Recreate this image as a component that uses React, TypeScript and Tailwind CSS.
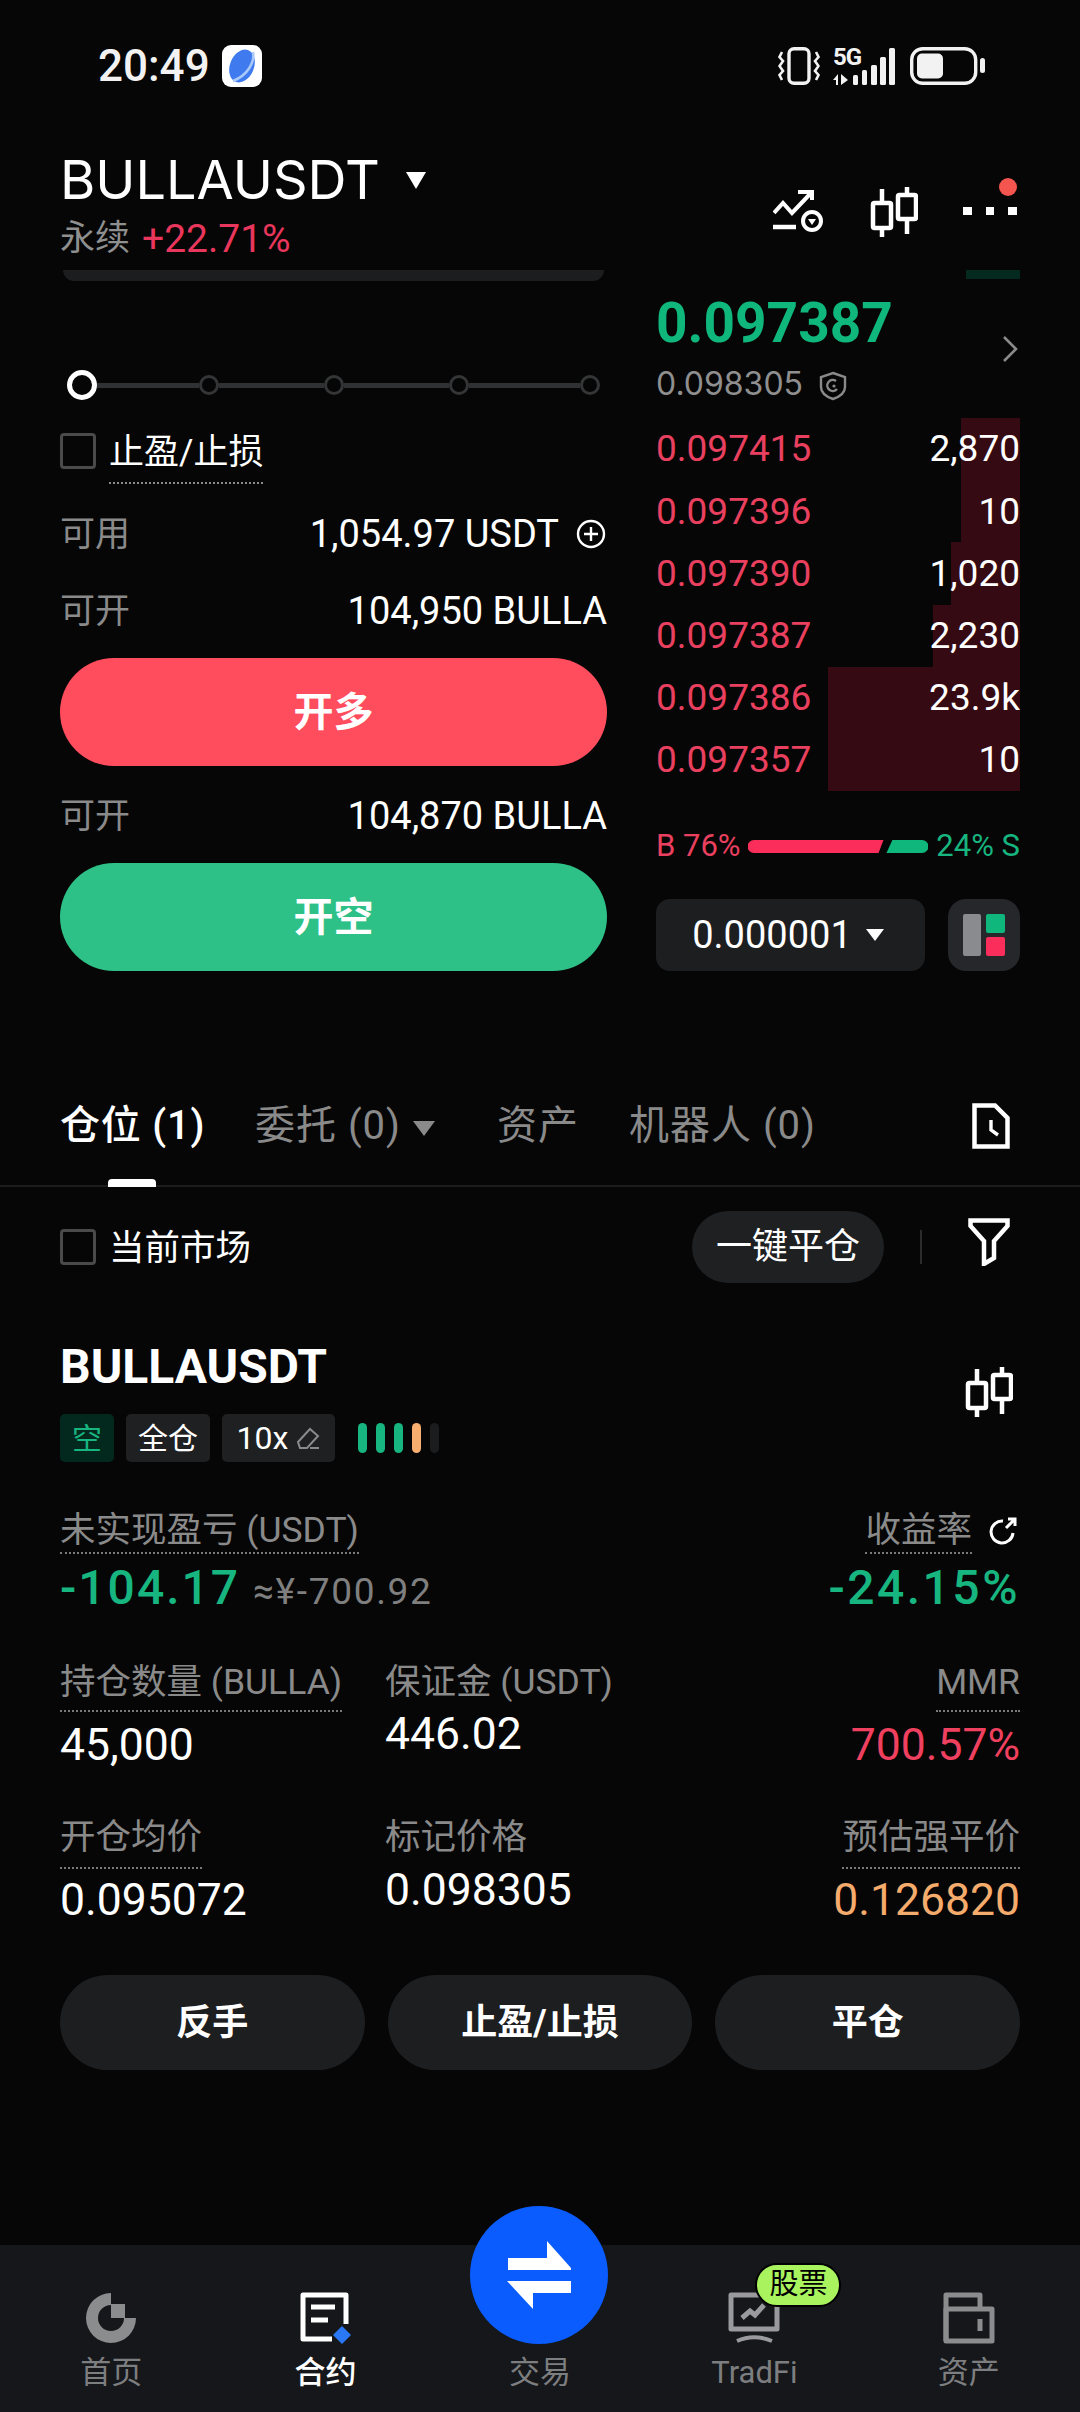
import React from "react";

function Tri({ w = 20, h = 14, color = "#fff" }: { w?: number; h?: number; color?: string }) {
  return (
    <svg width={w} height={h} viewBox="0 0 20 14" className="shrink-0" preserveAspectRatio="none">
      <path d="M0 0H20L10 14Z" fill={color} />
    </svg>
  );
}

function Candles({ className = "" }: { className?: string }) {
  return (
    <svg width="48" height="52" viewBox="0 0 48 52" className={className} fill="none" stroke="#fff" strokeWidth="4.5">
      <path d="M12 3V17M12 42V51M37 1V9M37 33V48" />
      <rect x="3" y="17" width="18" height="25" rx="1.5" />
      <rect x="28" y="9" width="18" height="24" rx="1.5" />
    </svg>
  );
}

function StatusBar() {
  return (
    <div className="h-[132px] flex items-start justify-between pl-[98px] pr-[95px] pt-[45px]">
      <div className="flex items-center gap-[12px] h-[42px]">
        <span className="text-[44px] leading-[42px] font-medium text-[#f2f2f2] font-['Roboto']">20:49</span>
        <svg width="40" height="42" viewBox="0 0 40 42">
          <rect width="40" height="42" rx="9" fill="#fff" />
          <ellipse cx="20" cy="21" rx="12" ry="17" transform="rotate(22 20 21)" fill="#3f7bee" />
          <path d="M31 7C33 17 26 30 11 36" stroke="#a9c8fb" strokeWidth="2.6" fill="none" />
        </svg>
      </div>
      <div className="flex items-center h-[42px]">
        <svg width="42" height="38" viewBox="0 0 42 38" fill="none" stroke="#f2f2f2">
          <rect x="11" y="1.7" width="20" height="34.6" rx="5" strokeWidth="3.4" />
          <path d="M4 5L1.5 10L5 14L1.5 19L5 24L1.5 28L4 33M38 5L40.5 10L37 14L40.5 19L37 24L40.5 28L38 33" strokeWidth="2.6" />
        </svg>
        <div className="relative w-[62px] h-[37px] ml-[13px]">
          <span className="absolute left-0 top-[-3px] text-[24px] leading-[24px] font-bold text-[#f2f2f2] font-['Roboto'] tracking-[-1px]">5G</span>
          <svg width="62" height="37" viewBox="0 0 62 37" className="absolute left-0 top-0" fill="#f2f2f2">
            <path d="M0 32L5 26V37H3V32ZM8 26L15 32L8 37Z" />
            <rect x="20" y="27" width="5" height="10" rx="1.5" />
            <rect x="29" y="22" width="5" height="15" rx="1.5" />
            <rect x="38" y="17" width="6" height="20" rx="1.5" />
            <rect x="47" y="9" width="6" height="28" rx="1.5" />
            <rect x="56" y="0" width="6" height="37" rx="1.5" />
          </svg>
        </div>
        <svg width="75" height="38" viewBox="0 0 75 38" fill="none" className="ml-[15px]">
          <rect x="1.7" y="1.7" width="64" height="34.6" rx="11" stroke="#f2f2f2" strokeWidth="3.4" />
          <rect x="7" y="6.5" width="26" height="25" rx="5" fill="#f2f2f2" />
          <rect x="70" y="11" width="5" height="15" rx="2.5" fill="#f2f2f2" />
        </svg>
      </div>
    </div>
  );
}

function Header() {
  return (
    <div className="h-[138px] flex justify-between pl-[60px] pr-[60px]">
      <div>
        <div className="flex items-center h-[64px] mt-[16px]">
          <span className="text-[54px] leading-[64px] text-white">BULLAUSDT</span>
          <span className="ml-[26px]"><Tri w={20} h={17} /></span>
        </div>
        <div className="flex items-center h-[44px] mt-[5px] leading-[44px] font-['Roboto','Noto_Sans_CJK_SC']">
          <span className="text-[35px] text-[#8f8f8f]">永续</span>
          <span className="ml-[12px] text-[39px] text-[#e9365c]">+22.71%</span>
        </div>
      </div>
      <div className="flex items-start pt-[45px]">
        <svg width="50" height="42" viewBox="0 0 50 42" fill="none" stroke="#fff" strokeWidth="4" className="mt-[13px]">
          <path d="M1 23L10 13L19 23L37 4" />
          <path d="M25 2H39V10" />
          <path d="M0 37H23" strokeWidth="4.5" />
          <circle cx="39" cy="31" r="9" />
          <path d="M35 29H43L39 35Z" fill="#fff" stroke="none" />
        </svg>
        <Candles className="ml-[47px] mt-[9px]" />
        <div className="relative w-[57px] h-[50px] ml-[45px]">
          <div className="absolute left-0 top-[30px] flex gap-[14px]">
            <div className="w-[9px] h-[8px] bg-white" />
            <div className="w-[8px] h-[8px] bg-white" />
            <div className="w-[9px] h-[8px] bg-white" />
          </div>
          <div className="absolute right-[3px] top-[1px] w-[18px] h-[18px] rounded-full bg-[#f4554e]" />
        </div>
      </div>
    </div>
  );
}

function Slider() {
  const Node = () => <div className="w-[20px] h-[20px] rounded-full border-[3px] border-[#343536] shrink-0" />;
  const Line = ({ w }: { w: string }) => <div className={`${w} h-[5px] bg-[#303132]`} />;
  return (
    <div className="flex items-center ml-[7px] mt-[89px] h-[30px]">
      <div className="w-[30px] h-[30px] rounded-full border-[5px] border-white shrink-0" />
      <Line w="w-[102px]" />
      <Node />
      <Line w="w-[105px]" />
      <Node />
      <Line w="w-[105px]" />
      <Node />
      <Line w="w-[111px]" />
      <Node />
    </div>
  );
}

function InfoRow({ label, children }: { label: string; children: React.ReactNode }) {
  return (
    <div className="flex justify-between items-center h-[44px] font-['Roboto','Noto_Sans_CJK_SC']">
      <span className="text-[35px] leading-[44px] pt-[2px] text-[#8a8a8a]">{label}</span>
      {children}
    </div>
  );
}

function LeftForm() {
  return (
    <div className="w-[547px]">
      <div className="h-[11px] mx-[3px] rounded-b-[14px] bg-[#1c1d1f]" />
      <Slider />
      <div className="flex items-center mt-[33px] h-[36px]">
        <div className="w-[36px] h-[36px] rounded-[4px] border-[3px] border-[#4a4a4a]" />
        <span className="ml-[13px] text-[35px] leading-[46px] text-white font-['Roboto','Noto_Sans_CJK_SC'] border-b-[2px] border-dotted border-[#8a8a8a] mt-[12px] h-[54px]">止盈/止损</span>
      </div>
      <div className="mt-[43px]">
        <InfoRow label="可用">
          <span className="flex items-center text-[38px] leading-[44px] text-white">
            1,054.97 USDT
            <svg width="30" height="30" viewBox="0 0 30 30" fill="none" stroke="#fff" strokeWidth="2.4" className="ml-[17px] mr-[1px]">
              <circle cx="15" cy="15" r="13" />
              <path d="M15 8V22M8 15H22" />
            </svg>
          </span>
        </InfoRow>
      </div>
      <div className="mt-[33px]">
        <InfoRow label="可开"><span className="text-[38px] leading-[44px] text-white">104,950 BULLA</span></InfoRow>
      </div>
      <div className="mt-[25px] h-[108px] rounded-full bg-[#ff4d5e] flex items-center justify-center text-[40px] font-semibold text-white">开多</div>
      <div className="mt-[28px]">
        <InfoRow label="可开"><span className="text-[38px] leading-[44px] text-white">104,870 BULLA</span></InfoRow>
      </div>
      <div className="mt-[25px] h-[108px] rounded-full bg-[#2ec187] flex items-center justify-center text-[40px] font-semibold text-white">开空</div>
    </div>
  );
}

const book: [string, string, string][] = [
  ["0.097415", "2,870", "w-[59px]"],
  ["0.097396", "10", "w-[59px]"],
  ["0.097390", "1,020", "w-[69px]"],
  ["0.097387", "2,230", "w-[87px]"],
  ["0.097386", "23.9k", "w-[192px]"],
  ["0.097357", "10", "w-[192px]"],
];

function RightBook() {
  return (
    <div className="w-[364px] ml-[49px]">
      <div className="h-[9px] flex justify-end"><div className="w-[54px] bg-[#04291f]" /></div>
      <div className="mt-[15px] h-[58px]">
        <div className="text-[55px] leading-[58px] font-bold text-[#0fb77d] font-['Roboto']">0.097387</div>
      </div>
      <div className="relative flex items-center mt-[10px] h-[44px]">
        <span className="text-[32px] leading-[44px] text-[#8f8f8f]">0.098305</span>
        <svg width="28" height="30" viewBox="0 0 28 30" fill="none" stroke="#8a8a8a" strokeWidth="2.4" className="ml-[16px] mt-[4px]">
          <path d="M14 2L26 6V16C26 22 20 26 14 28C8 26 2 22 2 16V6Z" />
          <path d="M18 18A5.5 5.5 0 1 1 17 10" />
          <circle cx="15" cy="15" r="1.6" fill="#8a8a8a" stroke="none" />
        </svg>
        <svg width="16" height="26" viewBox="0 0 16 26" fill="none" stroke="#8a8a8a" strokeWidth="2.6" className="absolute right-[2px] top-[-26px]">
          <path d="M2 1L14 13L2 25" />
        </svg>
      </div>
      <div className="mt-[12px]">
        {book.map(([p, q, w]) => (
          <div key={p} className="relative h-[62.2px] flex items-center justify-between font-['Roboto']">
            <div className={`absolute right-0 top-0 bottom-0 ${w} bg-[#360a12]`} />
            <span className="relative text-[37px] text-[#e9405f]">{p}</span>
            <span className="relative text-[37px] text-white">{q}</span>
          </div>
        ))}
      </div>
      <div className="flex items-center justify-between mt-[35px] h-[40px] text-[31px] font-['Roboto']">
        <span className="text-[#e9405f]">B 76%</span>
        <svg width="180" height="13" viewBox="0 0 182 13" preserveAspectRatio="none" className="mx-[6px]">
          <path d="M6 0H137L132 13H6A6 6 0 0 1 6 0Z" fill="#fb2e5b" />
          <path d="M146 0H176A6 6 0 0 1 176 13H140Z" fill="#0fb77d" />
        </svg>
        <span className="text-[#17b57f]">24% S</span>
      </div>
      <div className="flex justify-between mt-[33px]">
        <div className="w-[269px] h-[72px] rounded-[14px] bg-[#1d1e20] flex items-center justify-center gap-[14px] pr-[5px]">
          <span className="text-[38px] text-white font-['Roboto']">0.000001</span>
          <Tri w={18} h={12} />
        </div>
        <div className="w-[72px] h-[72px] rounded-[18px] bg-[#26272a] grid grid-cols-[18px_19px] grid-rows-[19px_19px] gap-x-[5px] gap-y-[4px] content-center justify-center">
          <div className="row-span-2 rounded-[2px] bg-[#8a8b8e]" />
          <div className="rounded-[2px] bg-[#0fb77d]" />
          <div className="rounded-[2px] bg-[#fb2e5b]" />
        </div>
      </div>
    </div>
  );
}

function Tabs() {
  return (
    <div className="mt-[132px] h-[84px] relative border-b-[2px] border-[#1b1c1e] flex items-start pl-[60px] pr-[70px] text-[40px] leading-[46px] font-['Roboto','Noto_Sans_CJK_SC'] text-[#8a8a8a]">
      <span className="text-white font-medium w-[145px] whitespace-nowrap tracking-[0.8px]">仓位 (1)</span>
      <span className="ml-[50px] w-[143px] whitespace-nowrap tracking-[1px]">委托 (0)</span>
      <span className="ml-[15px] mt-[18px]"><Tri w={22} h={15} color="#8a8a8a" /></span>
      <span className="ml-[62px] whitespace-nowrap tracking-[1px]">资产</span>
      <span className="ml-[50px] whitespace-nowrap tracking-[1px]">机器人 (0)</span>
      <svg width="38" height="46" viewBox="0 0 38 46" fill="none" stroke="#fff" strokeWidth="4.5" className="ml-auto">
        <path d="M2.5 2.5H23L35.5 15V43.5H2.5Z" />
        <path d="M19 17V27L26 32" strokeWidth="3.4" />
      </svg>
      <div className="absolute left-[108px] bottom-[-2px] w-[48px] h-[8px] rounded-t-[4px] bg-white" />
    </div>
  );
}

function Filter() {
  return (
    <div className="flex items-center h-[72px] mt-[24px] pl-[60px] pr-[70px]">
      <div className="w-[36px] h-[36px] rounded-[4px] border-[3px] border-[#4a4a4a]" />
      <span className="ml-[13px] pt-[2px] text-[35.5px] text-white font-['Roboto','Noto_Sans_CJK_SC']">当前市场</span>
      <div className="ml-auto w-[192px] h-[72px] rounded-full bg-[#1f2022] flex items-center justify-center text-[36px] text-white font-['Roboto','Noto_Sans_CJK_SC']">一键平仓</div>
      <div className="ml-[36px] w-[2px] h-[34px] bg-[#2a2b2d]" />
      <svg width="42" height="48" viewBox="0 0 42 48" fill="none" stroke="#fff" strokeWidth="4.5" className="ml-[46px] mb-[10px]">
        <path d="M2.5 2.5H39.5V8L26 23V40L16 46V23L2.5 8Z" />
      </svg>
    </div>
  );
}

function Label({ children, right, h }: { children: React.ReactNode; right?: boolean; h: string }) {
  return (
    <span className={`text-[35.5px] leading-[44px] ${h} text-[#8a8a8a] whitespace-nowrap border-b-[2px] border-dotted border-[#7a7a7a] ${right ? "self-end" : "self-start"}`}>
      {children}
    </span>
  );
}

function Position() {
  return (
    <div className="px-[60px] font-['Roboto','Noto_Sans_CJK_SC']">
      <div className="relative mt-[61px]">
        <div className="h-[46px] text-[48px] leading-[46px] font-bold text-white">BULLAUSDT</div>
        <div className="absolute right-[7px] top-[22px]"><Candles /></div>
      </div>
      <div className="flex items-center mt-[24px] h-[48px] text-[30px]">
        <div className="w-[54px] h-[48px] rounded-[5px] bg-[#03291f] text-[#17b57f] flex items-center justify-center">空</div>
        <div className="ml-[12px] w-[84px] h-[48px] rounded-[5px] bg-[#1f2022] text-white flex items-center justify-center">全仓</div>
        <div className="ml-[12px] w-[113px] h-[48px] rounded-[5px] bg-[#1f2022] text-white flex items-center justify-center gap-[8px] text-[32px]">
          10x
          <svg width="24" height="24" viewBox="0 0 24 24" fill="none" stroke="#8a8a8a" strokeWidth="2">
            <path d="M2 16L14 3L22 10L11 22H4L2 16Z" />
            <path d="M14 22H23" />
          </svg>
        </div>
        <div className="ml-[23px] flex gap-[9px]">
          <div className="w-[9px] h-[30px] rounded-full bg-[#17b57f]" />
          <div className="w-[9px] h-[30px] rounded-full bg-[#17b57f]" />
          <div className="w-[9px] h-[30px] rounded-full bg-[#17b57f]" />
          <div className="w-[9px] h-[30px] rounded-full bg-[#f7ae6e]" />
          <div className="w-[9px] h-[30px] rounded-full bg-[#1b1c1e]" />
        </div>
      </div>

      <div className="flex justify-between mt-[46px]">
        <div className="flex flex-col">
          <Label h="h-[46px]">未实现盈亏 (USDT)</Label>
          <div className="flex items-baseline mt-[4px] h-[60px]">
            <span className="text-[48px] leading-[60px] font-medium text-[#17b57f] tracking-[2px]">-104.17</span>
            <span className="ml-[13px] text-[37px] text-[#7f7f7f] tracking-[1.7px]">≈¥-700.92</span>
          </div>
        </div>
        <div className="flex flex-col items-end">
          <div className="flex items-start">
            <Label h="h-[46px]">收益率</Label>
            <svg width="30" height="30" viewBox="0 0 30 30" fill="none" stroke="#fff" strokeWidth="3" className="ml-[16px] mt-[8px] mr-[2px]">
              <path d="M25 17A11 11 0 1 1 15 5" />
              <path d="M18 12L27 3M20 3H27V10" />
            </svg>
          </div>
          <span className="mt-[4px] text-[48px] leading-[60px] font-medium text-[#17b57f] tracking-[2.5px]">-24.15%</span>
        </div>
      </div>

      <div className="grid grid-cols-[325px_1fr_auto] mt-[42px]">
        <div className="flex flex-col">
          <Label h="h-[52px]">持仓数量 (BULLA)</Label>
          <span className="mt-[8px] text-[44.5px] leading-[50px] text-white">45,000</span>
        </div>
        <div className="flex flex-col">
          <span className="text-[35.5px] leading-[44px] text-[#8a8a8a]">保证金 (USDT)</span>
          <span className="mt-[5px] text-[44.5px] leading-[50px] text-white">446.02</span>
        </div>
        <div className="flex flex-col items-end">
          <Label right h="h-[52px]">MMR</Label>
          <span className="mt-[8px] text-[44.5px] leading-[50px] text-[#f0405f]">700.57%</span>
        </div>
      </div>

      <div className="grid grid-cols-[325px_1fr_auto] mt-[45px]">
        <div className="flex flex-col">
          <Label h="h-[54px]">开仓均价</Label>
          <span className="mt-[6px] text-[44.5px] leading-[50px] text-white">0.095072</span>
        </div>
        <div className="flex flex-col">
          <span className="text-[35.5px] leading-[44px] text-[#8a8a8a]">标记价格</span>
          <span className="mt-[6px] text-[44.5px] leading-[50px] text-white">0.098305</span>
        </div>
        <div className="flex flex-col items-end">
          <Label right h="h-[54px]">预估强平价</Label>
          <span className="mt-[6px] text-[44.5px] leading-[50px] text-[#f5ab6c]">0.126820</span>
        </div>
      </div>

      <div className="grid grid-cols-3 gap-x-[23px] mt-[50px]">
        {["反手", "止盈/止损", "平仓"].map((t) => (
          <div key={t} className="h-[95px] rounded-full bg-[#1d1e20] flex items-center justify-center text-[36px] font-bold text-white">{t}</div>
        ))}
      </div>
    </div>
  );
}

function NavItem({ label, active, children }: { label: string; active?: boolean; children: React.ReactNode }) {
  return (
    <div className="relative flex flex-col items-center w-[216px]">
      <div className="h-[55px] mt-[45px] flex items-center justify-center">{children}</div>
      <span className={`mt-[8px] text-[31px] leading-[40px] ${active ? "text-white font-medium" : "text-[#7d7e80]"}`}>{label}</span>
    </div>
  );
}

function BottomNav() {
  return (
    <div className="relative mt-auto h-[167px] bg-[#15171a] flex justify-center font-['Roboto','Noto_Sans_CJK_SC'] px-[4px]">
      <NavItem label="首页">
        <svg width="52" height="52" viewBox="0 0 52 52">
          <path d="M26 1A25 25 0 1 0 51 26H39A13 13 0 1 1 26 13Z" fill="#8b8c8e" />
          <rect x="26" y="12" width="14" height="14" fill="#8b8c8e" />
        </svg>
      </NavItem>
      <NavItem label="合约" active>
        <svg width="52" height="52" viewBox="0 0 52 52" fill="none">
          <path d="M32 47H3V3H46V32" stroke="#fff" strokeWidth="5" strokeLinejoin="round" />
          <path d="M11 15H35M11 28H28" stroke="#fff" strokeWidth="5" />
          <path d="M42 35L50 43L42 51L34 43Z" fill="#2b78f6" stroke="#2b78f6" strokeWidth="1.5" strokeLinejoin="round" />
        </svg>
      </NavItem>
      <NavItem label="交易"><div className="w-[52px]" /></NavItem>
      <NavItem label="TradFi">
        <div className="relative">
          <svg width="52" height="52" viewBox="0 0 52 52" fill="none">
            <rect x="3" y="3" width="46" height="34" stroke="#9a9a9e" strokeWidth="5" strokeLinejoin="round" />
            <path d="M14 26L22 19L27 23L36 13" stroke="#9a9a9e" strokeWidth="5" />
            <path d="M9 49C20 44 32 44 44 49" stroke="#9a9a9e" strokeWidth="4" />
          </svg>
          <div className="absolute left-[27px] top-[-29px] w-[86px] h-[44px] rounded-full bg-[#a9f35f] border-[2px] border-black flex items-center justify-center text-[29px] text-black">股票</div>
        </div>
      </NavItem>
      <NavItem label="资产">
        <svg width="52" height="52" viewBox="0 0 52 52" fill="none" stroke="#8b8c8e" strokeWidth="5" strokeLinejoin="round">
          <path d="M3 49V3H37V17" />
          <rect x="3" y="17" width="46" height="32" />
          <path d="M37 27V39" strokeWidth="5" />
        </svg>
      </NavItem>
      <div className="absolute left-[470px] top-[-39px] w-[138px] h-[138px] rounded-full bg-[#0a5cff] flex items-center justify-center">
        <svg width="64" height="68" viewBox="0 0 64 68" fill="#fff">
          <path d="M40 0L64 27V29H1V17H40Z" />
          <path d="M0 40H64V52H26V68Z" />
        </svg>
      </div>
    </div>
  );
}

export default function App() {
  return (
    <div className="w-[1080px] h-[2412px] bg-[#060606] flex flex-col overflow-hidden font-['Inter','Noto_Sans_CJK_SC',sans-serif]">
      <StatusBar />
      <Header />
      <div className="flex pl-[60px]">
        <LeftForm />
        <RightBook />
      </div>
      <Tabs />
      <Filter />
      <Position />
      <BottomNav />
    </div>
  );
}
